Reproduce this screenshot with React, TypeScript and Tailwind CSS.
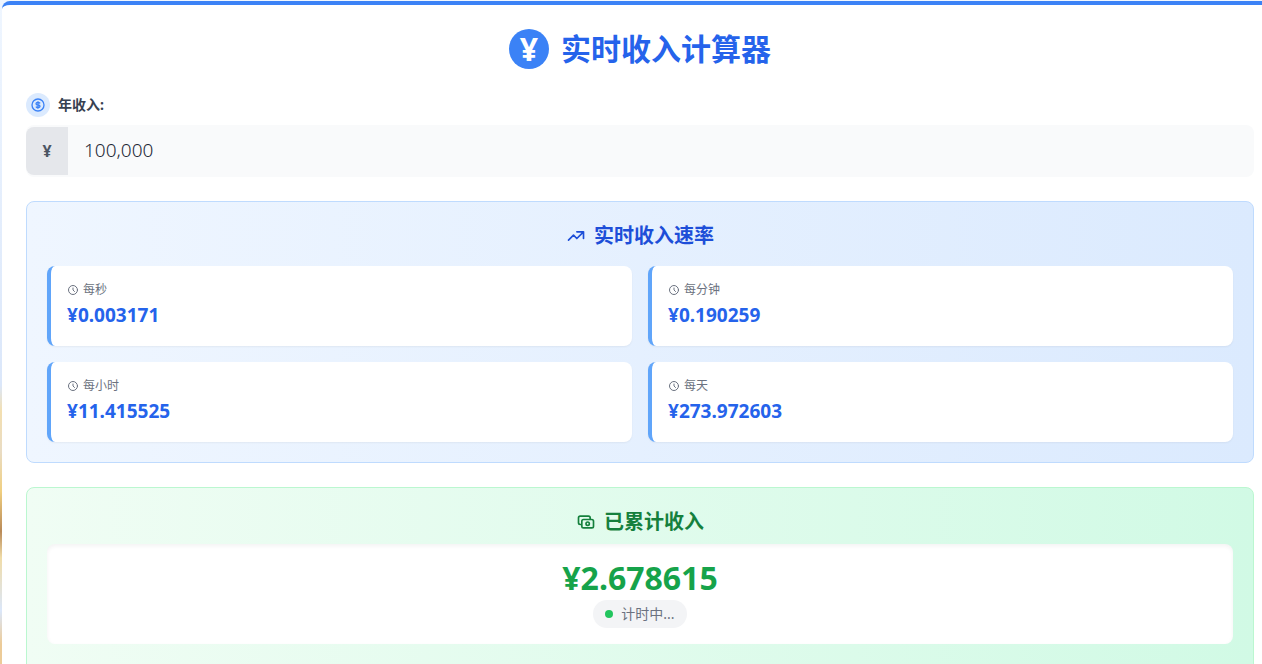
import { useState } from 'react'
import type { ReactNode } from 'react'

const rates = [
  { label: '每秒', value: '0.003171' },
  { label: '每分钟', value: '0.190259' },
  { label: '每小时', value: '11.415525' },
  { label: '每天', value: '273.972603' },
]

export default function App() {
  const [income, setIncome] = useState('100,000')

  return (
    <div className="h-screen overflow-hidden pl-[2px] pt-px bg-[linear-gradient(to_bottom,#eff6ff_0%,#dbe7fa_58%,#f3dfb0_62%,#e9dcc4_68%,#f0cf80_74%,#b98a58_80%,#f0dca8_84%,#dbe7fa_92%,#eccb98_97%)] font-['Noto_Sans','Noto_Sans_CJK_SC',sans-serif]">
      <main className="min-h-full rounded-tl-lg border-t-4 border-[#3b82f6] bg-white pt-6 pl-6 pr-2">
        <header className="flex items-center justify-center gap-3 mb-6">
          <span className="flex h-10 w-10 items-center justify-center rounded-full bg-[#3b82f6] text-[32px] leading-none font-bold text-white">¥</span>
          <h1 className="text-3xl leading-10 font-bold text-[#2563eb]">实时收入计算器</h1>
        </header>

        <section className="mb-6">
          <label htmlFor="income" className="mb-2 flex items-center gap-2 text-sm leading-6 font-bold text-[#374151]">
            <span className="flex h-6 w-6 items-center justify-center rounded-full bg-[#dbeafe] text-[#3b82f6]">
              <Icon className="h-4 w-4" d="M12 8c-1.657 0-3 .895-3 2s1.343 2 3 2 3 .895 3 2-1.343 2-3 2m0-8c1.11 0 2.08.402 2.599 1M12 8V7m0 1v8m0 0v1m0-1c-1.11 0-2.08-.402-2.599-1M21 12a9 9 0 11-18 0 9 9 0 0118 0z" />
            </span>
            年收入:
          </label>
          <div className="flex h-13 rounded-lg bg-[#f9fafb] py-[2px]">
            <span className="flex w-[42px] shrink-0 items-center justify-center rounded-l-lg bg-[#e5e7eb] font-bold text-[#4b5563]">¥</span>
            <input
              id="income"
              type="text"
              value={income}
              onChange={(e) => setIncome(e.target.value)}
              className="min-w-0 flex-1 bg-transparent px-4 pb-[2px] text-[19px] font-light text-[#1f2937] outline-none"
            />
          </div>
        </section>

        {/* Income rates */}
        <section className="mb-6 rounded-lg border border-[#bfdbfe] bg-linear-[to_right,#eff6ff,#dbeafe] p-5">
          <h2 className="mb-4 flex items-center justify-center gap-2 text-xl leading-7 font-bold text-[#1d4ed8]">
            <Icon className="h-5 w-5" d="M13 7h8m0 0v8m0-8l-8 8-4-4-6 6" />
            实时收入速率
          </h2>
          <div className="grid grid-cols-2 gap-4">
            {rates.map((r) => (
              <div key={r.label} className="rounded-lg border-l-4 border-[#60a5fa] bg-white p-4 shadow-[0_1px_2px_rgba(0,0,0,0.05)]">
                <div className="mb-1 flex items-center gap-1 text-xs leading-4 text-[#6b7280]">
                  <Icon className="h-3 w-3" d="M12 8v4l3 3m6-3a9 9 0 11-18 0 9 9 0 0118 0z" />
                  {r.label}
                </div>
                <div className="pb-[2px] text-[19px] leading-[26px] font-bold text-[#2563eb]">¥{r.value}</div>
              </div>
            ))}
          </div>
        </section>

        {/* Accumulated income */}
        <section className="rounded-lg border border-[#bbf7d0] bg-linear-[to_right,#f0fdf4,#d1fae5] px-5 pt-5 pb-10">
          <h2 className="mb-2 flex items-center justify-center gap-2 text-xl leading-7 font-bold text-[#15803d]">
            <Icon className="h-5 w-5" d="M17 9V7a2 2 0 00-2-2H5a2 2 0 00-2 2v6a2 2 0 002 2h2m2 4h10a2 2 0 002-2v-6a2 2 0 00-2-2H9a2 2 0 00-2 2v6a2 2 0 002 2zm7-5a2 2 0 11-4 0 2 2 0 014 0z" />
            已累计收入
          </h2>
          <div className="flex flex-col items-center gap-1 rounded-lg bg-white p-4 shadow-[inset_0_2px_4px_rgba(0,0,0,0.05)]">
            <div className="text-[32px] leading-9 font-bold text-[#16a34a]">¥2.678615</div>
            <div className="flex items-center gap-2 rounded-full bg-[#f3f4f6] px-3 py-1 text-sm leading-5 text-[#6b7280]">
              <span className="h-2 w-2 rounded-full bg-[#22c55e]" />
              计时中...
            </div>
          </div>
        </section>
      </main>
    </div>
  )
}

function Icon({ d, className }: { d: string; className: string }): ReactNode {
  return (
    <svg className={className} viewBox="0 0 24 24" fill="none" stroke="currentColor" strokeWidth={2} strokeLinecap="round" strokeLinejoin="round" aria-hidden="true">
      <path d={d} />
    </svg>
  )
}
